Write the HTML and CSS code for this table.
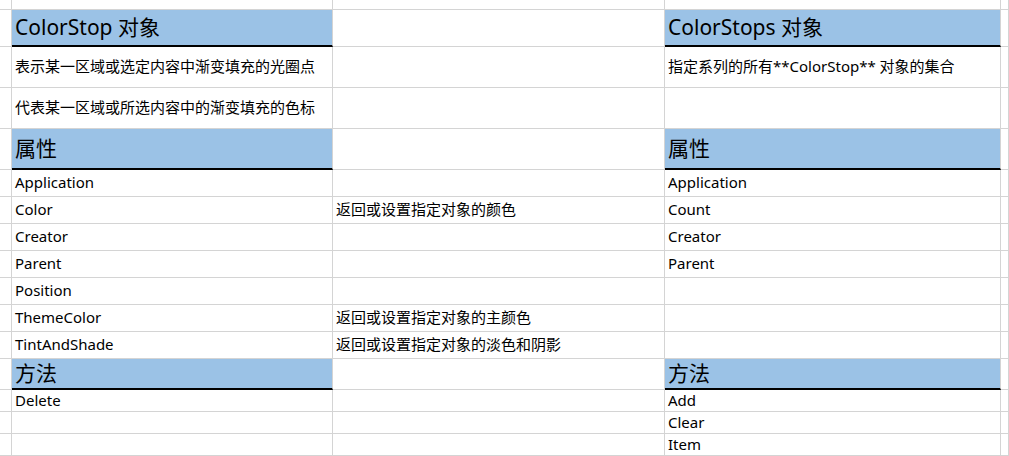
FILE: index.html
```html
<!DOCTYPE html>
<html lang="zh-CN">
<head>
<meta charset="utf-8">
<title>ColorStop 对象</title>
<link rel="stylesheet" href="styles.css">
</head>
<body>
<div class="sheet">
  <!-- row 0 -->
  <div class="cell"></div><div class="cell"></div><div class="cell"></div><div class="cell"></div><div class="cell"></div>
  <!-- row 1 -->
  <div class="cell"></div><div class="cell head">ColorStop 对象</div><div class="cell"></div><div class="cell head">ColorStops 对象</div><div class="cell"></div>
  <!-- row 2 -->
  <div class="cell"></div><div class="cell">表示某一区域或选定内容中渐变填充的光圈点</div><div class="cell"></div><div class="cell">指定系列的所有**ColorStop** 对象的集合</div><div class="cell"></div>
  <!-- row 3 -->
  <div class="cell"></div><div class="cell">代表某一区域或所选内容中的渐变填充的色标</div><div class="cell"></div><div class="cell"></div><div class="cell"></div>
  <!-- row 4 -->
  <div class="cell"></div><div class="cell head">属性</div><div class="cell"></div><div class="cell head">属性</div><div class="cell"></div>
  <!-- properties -->
  <div class="cell"></div><div class="cell">Application</div><div class="cell"></div><div class="cell">Application</div><div class="cell"></div>
  <div class="cell"></div><div class="cell">Color</div><div class="cell">返回或设置指定对象的颜色</div><div class="cell">Count</div><div class="cell"></div>
  <div class="cell"></div><div class="cell">Creator</div><div class="cell"></div><div class="cell">Creator</div><div class="cell"></div>
  <div class="cell"></div><div class="cell">Parent</div><div class="cell"></div><div class="cell">Parent</div><div class="cell"></div>
  <div class="cell"></div><div class="cell">Position</div><div class="cell"></div><div class="cell"></div><div class="cell"></div>
  <div class="cell"></div><div class="cell">ThemeColor</div><div class="cell">返回或设置指定对象的主颜色</div><div class="cell"></div><div class="cell"></div>
  <div class="cell"></div><div class="cell">TintAndShade</div><div class="cell">返回或设置指定对象的淡色和阴影</div><div class="cell"></div><div class="cell"></div>
  <!-- methods header -->
  <div class="cell"></div><div class="cell head">方法</div><div class="cell"></div><div class="cell head">方法</div><div class="cell"></div>
  <!-- methods -->
  <div class="cell"></div><div class="cell">Delete</div><div class="cell"></div><div class="cell">Add</div><div class="cell"></div>
  <div class="cell"></div><div class="cell"></div><div class="cell"></div><div class="cell">Clear</div><div class="cell"></div>
  <div class="cell"></div><div class="cell"></div><div class="cell"></div><div class="cell">Item</div><div class="cell"></div>
</div>
</body>
</html>
```

FILE: styles.css
```css
html, body {
  margin: 0;
  padding: 0;
  background: #ffffff;
}

body {
  font-family: "Noto Sans", "Noto Sans CJK SC", sans-serif;
  color: #000000;
  overflow: hidden;
}

.sheet {
  display: grid;
  grid-template-columns: 12px 321px 332px 336px 1fr;
  grid-template-rows: 10px 37px 41px 41px 41px repeat(7, 27px) 31px repeat(3, 22px);
  width: 1009px;
  height: 456px;
}

.cell {
  box-sizing: border-box;
  border-right: 1px solid #d4d4d4;
  border-bottom: 1px solid #d4d4d4;
  display: flex;
  align-items: center;
  padding-left: 3px;
  padding-bottom: 1px;
  font-size: 15px;
  line-height: 1;
  white-space: nowrap;
  overflow: visible;
}

.head {
  background: #9bc2e6;
  border-bottom: 2px solid #000000;
  font-size: 21px;
  padding-bottom: 0;
}
```
